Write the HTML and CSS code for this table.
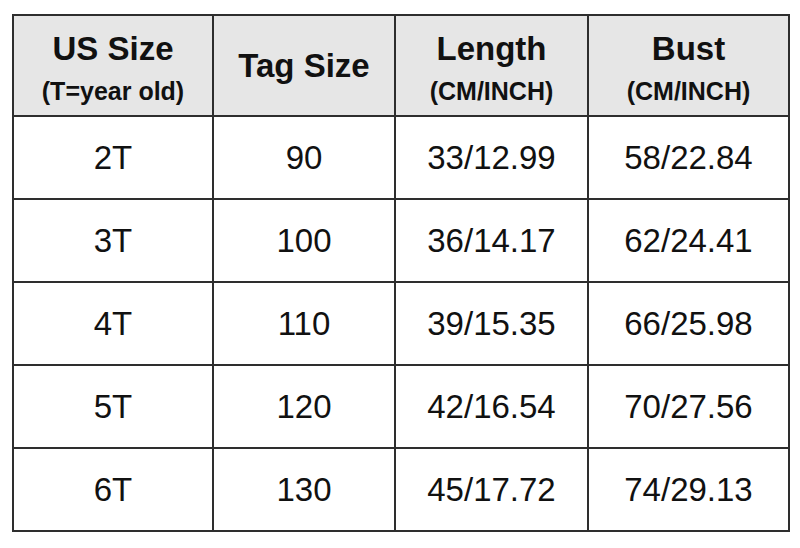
FILE: index.html
```html
<!DOCTYPE html>
<html>
<head>
<meta charset="utf-8">
<link rel="stylesheet" href="styles.css">
</head>
<body>
<table class="size-table">
  <colgroup>
    <col class="c1"><col class="c2"><col class="c3"><col class="c4">
  </colgroup>
  <thead>
    <tr class="head">
      <th><span class="main">US Size</span><span class="sub">(T=year old)</span></th>
      <th><span class="single">Tag Size</span></th>
      <th><span class="main">Length</span><span class="sub">(CM/INCH)</span></th>
      <th><span class="main">Bust</span><span class="sub">(CM/INCH)</span></th>
    </tr>
  </thead>
  <tbody>
    <tr><td>2T</td><td>90</td><td>33/12.99</td><td>58/22.84</td></tr>
    <tr><td>3T</td><td>100</td><td>36/14.17</td><td>62/24.41</td></tr>
    <tr><td>4T</td><td>110</td><td>39/15.35</td><td>66/25.98</td></tr>
    <tr><td>5T</td><td>120</td><td>42/16.54</td><td>70/27.56</td></tr>
    <tr><td>6T</td><td>130</td><td>45/17.72</td><td>74/29.13</td></tr>
  </tbody>
</table>
</body>
</html>
```
FILE: styles.css
```css
html, body {
  margin: 0;
  background: #fff;
}
body {
  padding: 14px 12px 0 12px;
  font-family: "Liberation Sans", Arial, sans-serif;
  color: #111;
}
.size-table {
  border-collapse: collapse;
  table-layout: fixed;
  width: 776px;
}
.c1 { width: 200px; }
.c2 { width: 182px; }
.c3 { width: 193px; }
.c4 { width: 201px; }
.size-table th,
.size-table td {
  border: 2px solid #2e2e2e;
  text-align: center;
  vertical-align: middle;
  padding: 0;
}
.head {
  height: 101px;
}
.head th {
  background: #e6e6e6;
  font-weight: bold;
}
.main {
  display: block;
  font-size: 33px;
  line-height: 50px;
}
.sub {
  display: block;
  font-size: 25px;
  line-height: 34px;
}
.single {
  display: block;
  font-size: 33px;
  line-height: 40px;
}
tbody tr {
  height: 83px;
}
tbody td {
  font-size: 33px;
  font-weight: normal;
}
```
